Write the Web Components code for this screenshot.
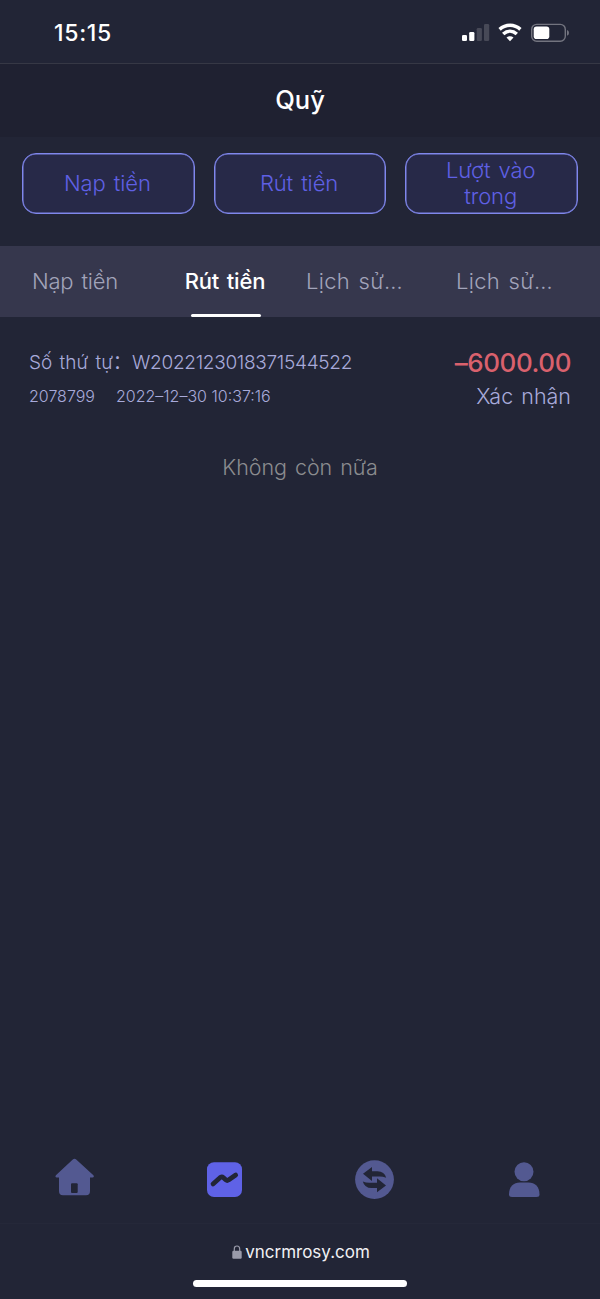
<!DOCTYPE html>
<html lang="vi">
<head>
<meta charset="utf-8">
<title>Quỹ</title>
<style>
html,body{margin:0;padding:0;background:#222536}
body{font-family:Inter,"Noto Sans CJK SC",sans-serif}
</style>
</head>
<body>
<fund-app></fund-app>
<script>
const define = (name, html) => {
  const t = document.createElement('template');
  t.innerHTML = html;
  customElements.define(name, class extends HTMLElement {
    constructor() {
      super();
      this.attachShadow({mode: 'open'}).append(t.content.cloneNode(true));
    }
  });
};

define('status-bar', `<style>
:host{display:flex;justify-content:space-between;box-sizing:border-box;height:64px;padding:0 31px 0 54px;border-bottom:1px solid #363845;color:#fff}
time{font-size:23px;line-height:26px;font-weight:550;padding-top:20px;letter-spacing:.7px}
svg{display:block;padding-top:22px}
</style>
<time>15:15</time>
<svg width="108" height="22" viewBox="461 22 108 22">
<g fill="#fff"><rect x="462" y="35" width="5" height="6" rx="1.3"/><rect x="469.2" y="32" width="5.2" height="9" rx="1.3"/></g>
<g fill="#474957"><rect x="476.7" y="28" width="5.2" height="13" rx="1.3"/><rect x="484" y="24" width="5.2" height="17" rx="1.3"/></g>
<g fill="none" stroke="#fff" stroke-width="3.5"><path d="M499.6 29.400C505.600 24 514.400 24 520.400 29.400"/><path d="M503.200 34C507.300 30.300 512.700 30.300 516.800 34"/></g>
<path d="M506.500 37.500C508.500 35.700 511.500 35.700 513.500 37.500L510 41.300Z" fill="#fff"/>
<rect x="531.7" y="24.4" width="33.6" height="16.8" rx="5" fill="none" stroke="#73747f" stroke-width="1.4"/>
<rect x="533.7" y="26.5" width="15.6" height="12.6" rx="2.8" fill="#fff"/>
<path d="M567 30v5.8q2-.7 2-2.9t-2-2.9" fill="#73747f"/>
</svg>`);

define('page-header', `<style>
:host{display:flex;justify-content:center;height:73px;background:#1f2131;color:#fff;font-size:25.5px;line-height:72px;font-weight:470}
</style><span><slot></slot></span>`);

define('action-button', `<style>
:host{display:flex;flex:1;align-items:center;justify-content:center;box-sizing:border-box;height:61px;border:1px solid #8087ec;border-radius:14px;background:#272948;color:#5f60e4;font-size:22px;line-height:26px;font-weight:340;text-align:center;word-spacing:2px;letter-spacing:-.1px;box-shadow:inset 0 0 0 .5px #7c83e6}
span{display:block;max-width:120px;margin:-2px 2px 0 0}
</style><span><slot></slot></span>`);

define('action-row', `<style>
:host{display:flex;gap:19px;padding:16px 22px 32px;height:61px}
</style><slot></slot>`);

define('tab-item', `<style>
:host{position:relative;display:block;box-sizing:border-box;flex:1;min-width:0;padding:0 6px;text-align:center;color:#a2a4ba;font-size:22px;font-weight:340;line-height:70px;word-spacing:2px;letter-spacing:-.2px;white-space:nowrap}
:host([clipped]){text-align:left;letter-spacing:.3px}
:host([active]){color:#fff;font-weight:500}
:host([active])::after{content:"";position:absolute;left:41px;bottom:0;width:70px;height:3px;border-radius:2px;background:#fff}
</style><slot></slot>`);

define('tab-strip', `<style>
:host{display:flex;height:71px;background:#36374d}
</style><slot></slot>`);

define('fund-record', `<style>
:host{display:flex;justify-content:space-between;padding:30px 29px 0;height:95px;color:#a8aada}
.l,.r{display:flex;flex-direction:column;white-space:nowrap}
.r{align-items:flex-end}
.id{display:flex;justify-content:space-between;width:323px;font-size:19px;line-height:32px;font-weight:340;letter-spacing:-.3px}
.lb{word-spacing:2px;letter-spacing:0}
.meta{display:flex;gap:21px;font-size:16px;line-height:34px;font-weight:340}
.amt{font-size:26px;line-height:32px;font-weight:500;letter-spacing:-.45px;color:#d9616d}
.state{font-size:21.5px;line-height:34px;font-weight:340;word-spacing:2px}
</style>
<div class="l"><div class="id"><span class="lb"><slot name="label"></slot></span><slot name="id"></slot></div><div class="meta"><slot name="user"></slot><slot name="time"></slot></div></div>
<div class="r"><div class="amt"><slot name="amount"></slot></div><div class="state"><slot name="state"></slot></div></div>`);

define('end-note', `<style>
:host{display:block;text-align:center;color:#8b8c8f;font-size:21.5px;line-height:30px;padding-top:10px;font-weight:340;word-spacing:2px;letter-spacing:-.05px}
</style><slot></slot>`);

define('nav-bar', `<style>
:host{display:grid;grid-template-columns:repeat(4,1fr);height:86px;align-items:center;justify-items:center;flex:none}
svg{display:block}
</style>
<svg width="70" height="70"><path d="M34.500 13.700q-.9 0-1.700.8L15.900 30.200q-1.200 2 .8 2.300H19V46q0 4.300 4 4.300H46q4 0 4-4.300V32.500h2.600q2-.4.8-2.300L36.200 14.500q-.8-.8-1.700-.8Z" fill="#535991"/><rect x="31" y="38.300" width="6.700" height="9.700" rx="1" fill="#222536"/></svg>
<svg width="70" height="70"><rect x="17" y="17.300" width="35" height="34.700" rx="7" fill="#5f62e6"/><path d="M23 39L30.500 32.200Q32 31.300 33.200 32.400L36 35Q37.200 36 38.500 35L45.700 30" fill="none" stroke="#222536" stroke-width="4.700" stroke-linecap="round" stroke-linejoin="round"/></svg>
<svg width="70" height="70"><circle cx="34.500" cy="34.600" r="19.400" fill="#535991"/><g fill="#222536"><path d="M23 28.800L32 22V26.200H37.500Q44.500 26.300 46.200 32.800Q42 31 37.500 31.600H32V36Z"/><path d="M46 40.500L37 47.300V43.100H31.500Q24.500 43 22.800 36.500Q27 38.300 31.500 37.700H37V33.300Z"/></g></svg>
<svg width="70" height="70"><circle cx="34" cy="26.800" r="9.500" fill="#535991"/><path d="M19 49.500C19 41.500 23.500 37.500 30 37.500H38.500C45 37.500 49.500 41.500 49.500 49.500Q49.500 52 46.500 52H22Q19 52 19 49.500Z" fill="#535991"/></svg>`);

define('browser-bar', `<style>
:host{display:flex;flex-direction:column;align-items:center;box-sizing:border-box;height:76px;border-top:1px solid #252839;color:#f1f1f4;flex:none}
.u{display:flex;align-items:center;height:22px;margin:17px 0 0 2px;gap:3px;font-size:17px;line-height:22px;letter-spacing:0}
.h{width:214px;height:7px;border-radius:4px;background:#fff;margin-top:17px}
</style>
<div class="u"><svg width="10" height="14"><path d="M2.300 6V4q0-3 2.700-3t2.700 3v2" fill="none" stroke="#9a9baa" stroke-width="1.200"/><rect x=".3" y="5.800" width="9.400" height="8" rx="1.200" fill="#9a9baa"/></svg><span><slot></slot></span></div>
<div class="h"></div>`);

define('fund-app', `<style>
:host{display:flex;flex-direction:column;width:600px;height:1299px;background:#222536;overflow:hidden}
main{flex:1}
</style>
<status-bar></status-bar>
<page-header>Quỹ</page-header>
<main>
<action-row><action-button>Nạp tiền</action-button><action-button>Rút tiền</action-button><action-button>Lượt vào trong</action-button></action-row>
<tab-strip><tab-item>Nạp tiền</tab-item><tab-item active>Rút tiền</tab-item><tab-item clipped>Lịch sử…</tab-item><tab-item clipped>Lịch sử…</tab-item></tab-strip>
<fund-record><span slot="label" lang="zh-CN">Số thứ tự：</span><span slot="id">W2022123018371544522</span><span slot="user">2078799</span><span slot="time">2022–12–30 10:37:16</span><span slot="amount">–6000.00</span><span slot="state">Xác nhận</span></fund-record>
<end-note>Không còn nữa</end-note>
</main>
<nav-bar></nav-bar>
<browser-bar>vncrmrosy.com</browser-bar>`);
</script>
</body>
</html>
